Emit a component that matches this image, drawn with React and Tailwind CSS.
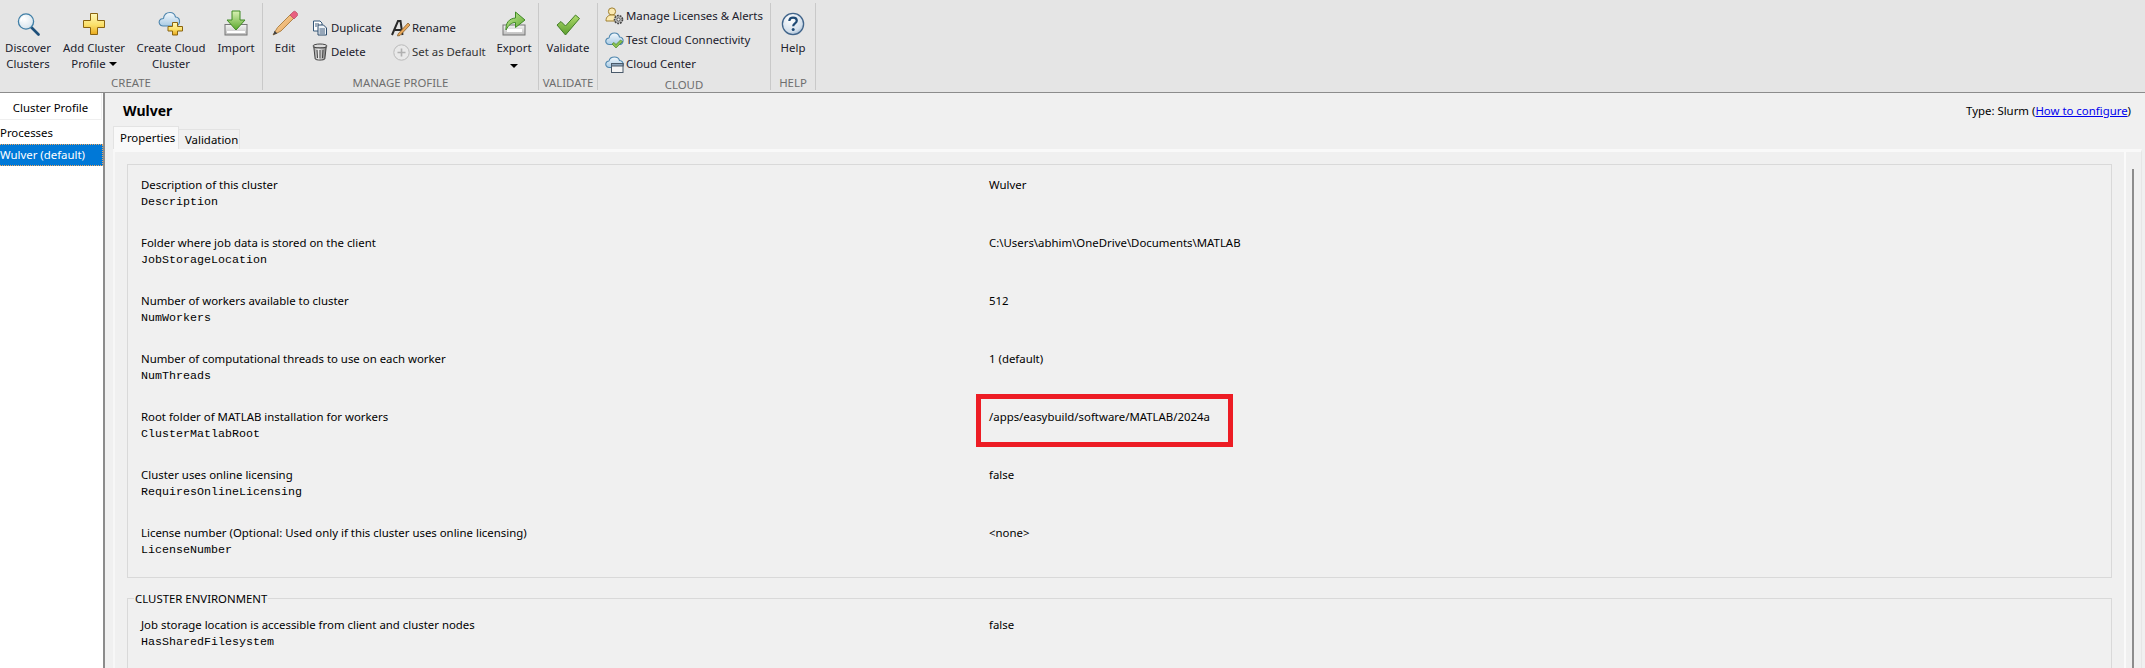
import React from 'react';

// --- toolbar icons ---
const IconDiscover = () => (
  <svg width="24" height="24" viewBox="0 0 24 24">
    <defs>
      <radialGradient id="glass" cx="0.4" cy="0.35" r="0.8">
        <stop offset="0" stopColor="#ffffff" />
        <stop offset="0.7" stopColor="#dce8f0" />
        <stop offset="1" stopColor="#9fbdd2" />
      </radialGradient>
    </defs>
    <path d="M15.5 15.5 L22.5 22.5" stroke="#1d4f7a" strokeWidth="2.6" strokeLinecap="round" />
    <circle cx="10" cy="9.5" r="7.6" fill="url(#glass)" stroke="#3f7ea6" strokeWidth="1.3" />
    <path d="M5 9.5 A5 5 0 0 1 9 4.6" fill="none" stroke="#fff" strokeWidth="1.4" />
  </svg>
);

const PlusShape = ({ id, d, sw = 1 }) => (
  <>
    <defs>
      <linearGradient id={id} x1="0" y1="0" x2="0" y2="1">
        <stop offset="0" stopColor="#fff8b8" />
        <stop offset="0.55" stopColor="#fbe06a" />
        <stop offset="1" stopColor="#e9a91c" />
      </linearGradient>
    </defs>
    <path d={d} fill={`url(#${id})`} stroke="#8a6410" strokeWidth={sw} strokeLinejoin="round" />
  </>
);

const IconAdd = () => (
  <svg width="24" height="24" viewBox="0 0 24 24">
    <PlusShape id="plusA" d="M8.5 1.5 H15.5 V8.5 H22.5 V15.5 H15.5 V22.5 H8.5 V15.5 H1.5 V8.5 H8.5 Z" />
  </svg>
);

const CloudShape = ({ id, d }) => (
  <>
    <defs>
      <linearGradient id={id} x1="0" y1="0" x2="0" y2="1">
        <stop offset="0" stopColor="#f4f9fd" />
        <stop offset="1" stopColor="#a9cbe4" />
      </linearGradient>
    </defs>
    <path d={d} fill={`url(#${id})`} stroke="#4e86ae" strokeWidth="1.1" strokeLinejoin="round" />
  </>
);

const IconCloudAdd = () => (
  <svg width="26" height="26" viewBox="0 0 26 26">
    <CloudShape id="cloudA" d="M5 16 C1.5 16 0.5 12.5 1.5 10.5 C2.5 8.5 4.5 8.5 5.5 8.5 C6 5 8.5 2.5 12 2.5 C15.5 2.5 17 5 17.5 7 C20.5 7 22 9.5 21.5 12.5 C21 15 19 16 17 16 Z" />
    <PlusShape id="plusB" sw={1} d="M14.5 12.5 H19.5 V16.5 H24.5 V21 H19.5 V25 H14.5 V21 H10 V16.5 H14.5 Z" />
  </svg>
);

const IconImport = () => (
  <svg width="24" height="26" viewBox="0 0 24 26">
    <defs>
      <linearGradient id="arrowG" x1="0" y1="0" x2="0" y2="1">
        <stop offset="0" stopColor="#d9f2b4" />
        <stop offset="1" stopColor="#5aa82c" />
      </linearGradient>
      <linearGradient id="trayG" x1="0" y1="0" x2="0" y2="1">
        <stop offset="0" stopColor="#f4f4f4" />
        <stop offset="1" stopColor="#bdbdbd" />
      </linearGradient>
    </defs>
    <rect x="1" y="14.5" width="22" height="10.5" fill="url(#trayG)" stroke="#777" />
    <rect x="3" y="21" width="18" height="2" fill="#fff" />
    <path d="M8 1 H16 V10 H21 L12 20 L3 10 H8 Z" fill="url(#arrowG)" stroke="#3f8a25" strokeLinejoin="round" />
  </svg>
);

const IconEdit = () => (
  <svg width="26" height="26" viewBox="0 0 26 26">
    <defs>
      <linearGradient id="pencil" x1="0" y1="0" x2="1" y2="1">
        <stop offset="0" stopColor="#fbd9a4" />
        <stop offset="1" stopColor="#e49f55" />
      </linearGradient>
    </defs>
    <path d="M5.5 17.5 L18.5 4.5 L22 8 L9 21 L1 25 Z" fill="url(#pencil)" stroke="#a87a3c" strokeWidth="0.9" strokeLinejoin="round" />
    <path d="M1 25 L2.6 20.8 L5.4 23.4 Z" fill="#444" />
    <path d="M18 5 L21 2 C22 1 23 1 24 2 L25 3 C26 4 26 5 25 6 L22 9 Z" fill="#e8607f" stroke="#b84a63" strokeWidth="0.7" />
  </svg>
);

const IconDuplicate = () => (
  <svg width="16" height="16" viewBox="0 0 16 16">
    <path d="M1.5 1 H8 L10 3 V11 H1.5 Z" fill="#fff" stroke="#35587a" />
    <path d="M6 5 H11.5 L14.5 8 V15 H6 Z" fill="#eef3f8" stroke="#2a4a6b" />
    <path d="M7.5 9 H13 M7.5 11 H13 M7.5 13 H13 M3 4 H7 M3 6 H5" stroke="#2a4a6b" strokeWidth="0.9" />
  </svg>
);

const IconDelete = () => (
  <svg width="16" height="18" viewBox="0 0 16 18">
    <defs>
      <linearGradient id="can" x1="0" y1="0" x2="1" y2="0">
        <stop offset="0" stopColor="#999" />
        <stop offset="0.4" stopColor="#eee" />
        <stop offset="1" stopColor="#777" />
      </linearGradient>
    </defs>
    <ellipse cx="8" cy="3" rx="7" ry="2" fill="#ddd" stroke="#444" />
    <path d="M1.8 4 L3.2 16 C4 17.4 12 17.4 12.8 16 L14.2 4 C12 5.4 4 5.4 1.8 4 Z" fill="url(#can)" stroke="#444" />
    <path d="M5 7 L5.5 15 M8 7 V15.5 M11 7 L10.5 15" stroke="#444" />
  </svg>
);

const IconRename = () => (
  <svg width="20" height="18" viewBox="0 0 20 18">
    <path d="M1 16 L7 2 H9.5 L11.5 16 M4 11 H11" fill="none" stroke="#2a2a2a" strokeWidth="2" />
    <path d="M7 15 L17 4 L19 6 L9 16.5 L6.5 17 Z" fill="#e8a75a" stroke="#7a5522" strokeWidth="0.7" />
  </svg>
);

const IconSetDefault = () => (
  <svg width="17" height="17" viewBox="0 0 17 17">
    <circle cx="8.5" cy="8.5" r="7.7" fill="#e9e9e9" stroke="#b9b9b9" />
    <path d="M8.5 4.5 V12.5 M4.5 8.5 H12.5" stroke="#b0b0b0" strokeWidth="1.6" />
  </svg>
);

const IconExport = () => (
  <svg width="24" height="26" viewBox="0 0 24 26">
    <defs>
      <linearGradient id="expG" x1="0" y1="0" x2="1" y2="1">
        <stop offset="0" stopColor="#c9ea9c" />
        <stop offset="1" stopColor="#5aa82c" />
      </linearGradient>
      <linearGradient id="trayE" x1="0" y1="0" x2="0" y2="1">
        <stop offset="0" stopColor="#f4f4f4" />
        <stop offset="1" stopColor="#bdbdbd" />
      </linearGradient>
    </defs>
    <rect x="1" y="15" width="22" height="10" fill="url(#trayE)" stroke="#777" />
    <rect x="5" y="19" width="15" height="3" fill="#fff" />
    <path d="M4 20 C3.5 13 7 8.5 13.5 8 V2 L23 10 L13.5 17.5 V12.5 C9.5 12.5 6.5 15 4 20 Z" fill="url(#expG)" stroke="#3f8a25" strokeLinejoin="round" />
  </svg>
);

const IconCheck = () => (
  <svg width="24" height="22" viewBox="0 0 24 22">
    <defs>
      <linearGradient id="chk" x1="0" y1="0" x2="0" y2="1">
        <stop offset="0" stopColor="#b0dc6e" />
        <stop offset="1" stopColor="#5c9e2e" />
      </linearGradient>
    </defs>
    <path d="M1 11 L5 7.5 L9.5 12 L19.5 1 L23.5 4.5 L9.5 21 Z" fill="url(#chk)" stroke="#417d25" strokeLinejoin="round" />
  </svg>
);

const IconHelp = () => (
  <svg width="24" height="24" viewBox="0 0 24 24">
    <defs>
      <radialGradient id="helpG" cx="0.4" cy="0.3" r="0.8">
        <stop offset="0" stopColor="#ffffff" />
        <stop offset="0.7" stopColor="#d3dfeb" />
        <stop offset="1" stopColor="#8aa6c4" />
      </radialGradient>
    </defs>
    <circle cx="12" cy="12" r="10.6" fill="url(#helpG)" stroke="#40648a" strokeWidth="1.3" />
    <path d="M8.3 9 C8.5 6.5 10 5.6 12 5.6 C14.4 5.6 15.8 7 15.8 8.8 C15.8 11.4 12.2 11.4 12.2 14.2" fill="none" stroke="#1f4a75" strokeWidth="2.2" />
    <circle cx="12.2" cy="17.6" r="1.5" fill="#1f4a75" />
  </svg>
);

const IconLicense = () => (
  <svg width="19" height="18" viewBox="0 0 19 18">
    <circle cx="7" cy="4.5" r="3.6" fill="#fbe9b0" stroke="#a08030" />
    <path d="M1 14 C1 9.5 3.5 8 7 8 C10.5 8 13 9.5 13 14 Z" fill="#fbe9b0" stroke="#a08030" />
    <circle cx="13.5" cy="12.5" r="4" fill="#bbb" stroke="#444" strokeWidth="1.6" strokeDasharray="1.8 1" />
    <circle cx="13.5" cy="12.5" r="1.6" fill="#eee" stroke="#444" strokeWidth="0.8" />
  </svg>
);

const IconCloudCheck = () => (
  <svg width="19" height="17" viewBox="0 0 19 17">
    <CloudShape id="cloudB" d="M4 12.5 C1 12.5 0.5 9.5 1 8 C1.5 6.5 3 6 4 6 C4.5 3 6.5 1 9.5 1 C12.5 1 14 3 14.5 5 C17 5 18.5 7 18 9.5 C17.5 11.5 16 12.5 14.5 12.5 Z" />
    <path d="M7 12 L9 10.5 L11 12.5 L15.5 8 L17.5 9.5 L11 16 Z" fill="#8cc152" stroke="#4d8a2a" strokeWidth="0.7" />
  </svg>
);

const IconCloudWindow = () => (
  <svg width="19" height="17" viewBox="0 0 19 17">
    <CloudShape id="cloudC" d="M4 11.5 C1 11.5 0.5 8.5 1 7 C1.5 5.5 3 5 4 5 C4.5 2.5 6.5 1 9.5 1 C12.5 1 14 2.5 14.5 4.5 C17 4.5 18.5 6.5 18 9 C17.5 11 16 11.5 14.5 11.5 Z" />
    <rect x="6.5" y="7.5" width="11.5" height="9" fill="#f4f4f4" stroke="#4a5a6a" />
    <rect x="6.5" y="7.5" width="11.5" height="2.5" fill="#8fa7bd" stroke="#4a5a6a" />
  </svg>
);

const Caret = () => (
  <svg width="8" height="4" viewBox="0 0 8 4" className="shrink-0">
    <path d="M0 0 H8 L4 4 Z" fill="#000" />
  </svg>
);

// --- toolbar parts ---
const BigButton = ({ icon, lines, width, caret }) => (
  <div className={`${width} flex flex-col items-center shrink-0`}>
    <div className="h-[33px] flex items-end justify-center">{icon}</div>
    <div className="mt-[4px] text-center leading-[16px] whitespace-nowrap">
      {lines.map((l, i) => (
        <div key={l} className="flex items-center justify-center gap-[3px]">
          {l}
          {caret && i === lines.length - 1 && <Caret />}
        </div>
      ))}
    </div>
  </div>
);

const SmallButton = ({ icon, label, muted, gap = 'ml-[1px]' }) => (
  <div className={`h-[24px] flex items-center whitespace-nowrap ${muted ? 'text-[#333]' : ''}`}>
    <div className="w-[20px] flex justify-center shrink-0">{icon}</div>
    <span className={gap}>{label}</span>
  </div>
);

const Section = ({ width, label, children }) => (
  <div className={`${width} mt-[3px] h-[87px] border-r border-[#c9c9c9] flex flex-col shrink-0`}>
    <div className="h-[73px] flex">{children}</div>
    <div className="h-[16px] pt-[1px] text-center leading-[16px] text-[#6e6e6e] whitespace-nowrap">{label}</div>
  </div>
);

const Toolbar = () => (
  <div className="h-[93px] bg-[#e5e5e5] border-b border-[#8c8c8c] flex text-[#20202c] shrink-0">
    <Section width="w-[263px]" label="CREATE">
      <BigButton width="w-[56px]" icon={<IconDiscover />} lines={['Discover', 'Clusters']} />
      <BigButton width="w-[76px]" icon={<IconAdd />} lines={['Add Cluster', 'Profile']} caret />
      <BigButton width="w-[78px]" icon={<IconCloudAdd />} lines={['Create Cloud', 'Cluster']} />
      <BigButton width="w-[52px]" icon={<IconImport />} lines={['Import']} />
    </Section>
    <Section width="w-[276px]" label="MANAGE PROFILE">
      <BigButton width="w-[44px]" icon={<IconEdit />} lines={['Edit']} />
      <div className="w-[81px] ml-[3px] pt-[13px] shrink-0">
        <SmallButton icon={<IconDuplicate />} label="Duplicate" />
        <SmallButton icon={<IconDelete />} label="Delete" />
      </div>
      <div className="w-[99px] pt-[13px] shrink-0">
        <SmallButton icon={<IconRename />} label="Rename" />
        <SmallButton icon={<IconSetDefault />} label="Set as Default" muted />
      </div>
      <div className="w-[48px] flex flex-col items-center shrink-0">
        <BigButton width="w-[48px]" icon={<IconExport />} lines={['Export']} />
        <div className="mt-[8px]"><Caret /></div>
      </div>
    </Section>
    <Section width="w-[59px]" label="VALIDATE">
      <BigButton width="w-[58px]" icon={<IconCheck />} lines={['Validate']} />
    </Section>
    <Section width="w-[173px]" label="CLOUD">
      <div className="pl-[6px] pt-[1px]">
        <SmallButton icon={<IconLicense />} label="Manage Licenses & Alerts" gap="ml-[2px]" />
        <SmallButton icon={<IconCloudCheck />} label="Test Cloud Connectivity" gap="ml-[2px]" />
        <SmallButton icon={<IconCloudWindow />} label="Cloud Center" gap="ml-[2px]" />
      </div>
    </Section>
    <Section width="w-[45px]" label="HELP">
      <BigButton width="w-[44px]" icon={<IconHelp />} lines={['Help']} />
    </Section>
  </div>
);

// --- property rows ---
const Row = ({ label, name, value }) => (
  <div className="h-[58px] grid grid-cols-[848px_1fr]">
    <div>
      <div className="leading-[16px] whitespace-nowrap">{label}</div>
      <div className="leading-[18px] whitespace-nowrap font-['Liberation_Mono',monospace] text-[11.67px]">{name}</div>
    </div>
    <div className="leading-[16px] whitespace-nowrap">{value}</div>
  </div>
);

const rows = [
  { label: 'Description of this cluster', name: 'Description', value: 'Wulver' },
  { label: 'Folder where job data is stored on the client', name: 'JobStorageLocation', value: 'C:\\Users\\abhim\\OneDrive\\Documents\\MATLAB' },
  { label: 'Number of workers available to cluster', name: 'NumWorkers', value: '512' },
  { label: 'Number of computational threads to use on each worker', name: 'NumThreads', value: '1 (default)' },
  { label: 'Root folder of MATLAB installation for workers', name: 'ClusterMatlabRoot', value: '/apps/easybuild/software/MATLAB/2024a' },
  { label: 'Cluster uses online licensing', name: 'RequiresOnlineLicensing', value: 'false' },
  { label: 'License number (Optional: Used only if this cluster uses online licensing)', name: 'LicenseNumber', value: '<none>' },
];

const Properties = () => (
  <div className="flex-1 min-w-0 pl-[12px] pr-[12px] pt-[12px] border-r-2 border-[#fafafa]">
    <div className="relative h-[414px] border border-[#d9d9d9] pl-[13px] pt-[12px] overflow-hidden">
      {rows.map(r => <Row key={r.name} {...r} />)}
      {/* annotation box over the MATLAB root value */}
      <div className="absolute left-[848px] top-[229px] w-[257px] h-[53px] border-[5px] border-[#ed1c24]" />
    </div>
    <fieldset className="mt-[12px] h-[120px] border border-[#d9d9d9] pl-[13px] pt-[11px]">
      <legend className="ml-[-7px] px-[1px] leading-[16px] whitespace-nowrap relative top-[1px]">CLUSTER ENVIRONMENT</legend>
      <Row label="Job storage location is accessible from client and cluster nodes" name="HasSharedFilesystem" value="false" />
    </fieldset>
  </div>
);

export default function App() {
  return (
    <div className="h-[668px] w-[2145px] overflow-hidden flex flex-col bg-[#f0f0f0] text-black font-['Noto_Sans',sans-serif] text-[11.4px]">
      <Toolbar />
      <div className="flex-1 min-h-0 flex">
        <aside className="w-[105px] shrink-0 bg-white border-r-2 border-[#8c8c8c]">
          <div className="h-[27px] pt-[3px] border-b border-r border-[#efefef] flex items-center justify-center mr-[1px]">Cluster Profile</div>
          <div className="h-[24px] pt-[2px] flex items-center">Processes</div>
          <div className="h-[22px] flex items-center bg-[#0078d7] text-white border border-dotted border-[#f0a860] border-l-0 whitespace-nowrap">Wulver (default)</div>
        </aside>
        <main className="flex-1 min-w-0 flex flex-col pl-[8px] pr-[3px]">
          <div className="h-[33px] flex items-center justify-between pl-[10px] pr-[11px] shrink-0">
            <span className="font-bold text-[14px] relative top-[1px]">Wulver</span>
            <span className="relative top-[1px]">Type: Slurm (<a className="text-[#0000ee] underline">How to configure</a>)</span>
          </div>
          <div className="h-[23px] flex items-end shrink-0">
            <div className="w-[66px] h-[23px] pl-[6px] bg-[#f9f9f9] border border-b-0 border-[#e3e3e3] flex items-center">Properties</div>
            <div className="w-[61px] h-[20px] pl-[6px] bg-[#f0f0f0] border border-b-0 border-l-0 border-[#e3e3e3] flex items-center">Validation</div>
          </div>
          <div className="flex-1 min-h-0 flex border-t-[3px] border-[#f9f9f9] border-l-2 border-r border-l-[#f7f7f7] border-r-[#e6e6e6]">
            <Properties />
            <div className="w-[15px] shrink-0 pl-[6px] pt-[17px]">
              <div className="w-[2px] h-full bg-[#8c8c8c]" />
            </div>
          </div>
        </main>
      </div>
    </div>
  );
}
